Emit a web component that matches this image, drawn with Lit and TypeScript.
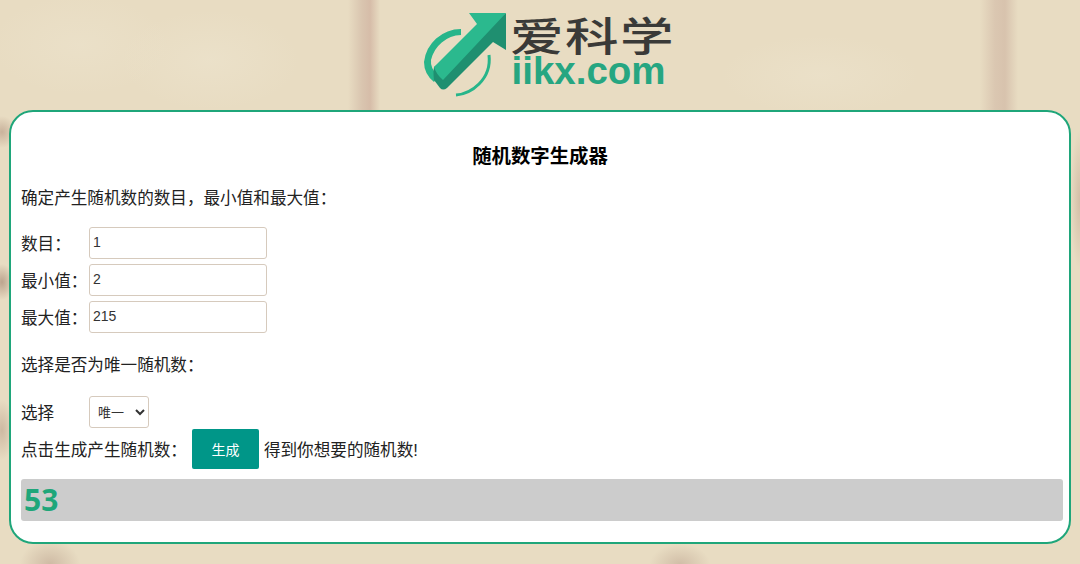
import { LitElement, html, css } from 'lit';
import { customElement, state } from 'lit/decorators.js';

@customElement('app-root')
export class AppRoot extends LitElement {
  @state() count = '1';
  @state() min = '2';
  @state() max = '215';
  @state() result = 53;

  static styles = css`
    :host {
      display: block;
      height: 564px;
      overflow: hidden;
      font-family: "Liberation Sans", "Noto Sans CJK SC", sans-serif;
      color: #222;
      font-size: 16.6px;
      background-color: #e8dcc2;
      /* blurred stripes of the paper photo behind the page */
      background-image:
        linear-gradient(90deg, transparent 348px, rgba(205, 178, 160, 0.55) 362px, rgba(208, 178, 160, 0.75) 370px, transparent 380px),
        linear-gradient(90deg, transparent 980px, rgba(205, 178, 160, 0.5) 995px, rgba(205, 178, 160, 0.6) 1005px, transparent 1018px),
        radial-gradient(ellipse 30px 24px at 50px 564px, rgba(190, 165, 145, 0.6), transparent),
        radial-gradient(ellipse 30px 20px at 680px 564px, rgba(190, 165, 145, 0.55), transparent),
        radial-gradient(ellipse 14px 16px at 2px 132px, rgba(180, 150, 130, 0.6), transparent),
        radial-gradient(ellipse 12px 18px at 2px 282px, rgba(170, 140, 120, 0.7), transparent),
        radial-gradient(ellipse 12px 30px at 2px 430px, rgba(180, 150, 130, 0.5), transparent),
        radial-gradient(ellipse 10px 70px at 1080px 200px, rgba(190, 160, 140, 0.5), transparent),
        radial-gradient(ellipse 90px 50px at 80px 45px, rgba(240, 233, 214, 0.3), transparent),
        radial-gradient(ellipse 90px 50px at 210px 60px, rgba(240, 233, 214, 0.35), transparent),
        radial-gradient(ellipse 100px 40px at 820px 75px, rgba(240, 233, 214, 0.3), transparent);
      background-size:
        100% 112px, 100% 112px,
        100% 100%, 100% 100%, 100% 100%, 100% 100%,
        100% 100%, 100% 100%, 100% 100%, 100% 100%, 100% 100%;
      background-repeat: no-repeat;
    }
    .header {
      height: 110px;
      display: flex;
      justify-content: center;
      padding-left: 14px;
    }
    .logo-mark {
      width: 90px;
      height: 88px;
      margin-top: 10px;
      flex: none;
    }
    .logo-text {
      width: 166px;
      margin-left: 1px;
      display: flex;
      flex-direction: column;
    }
    .logo-cn {
      font-family: "Noto Sans CJK SC", sans-serif;
      font-size: 40px;
      font-weight: 500;
      line-height: 46px;
      height: 46px;
      margin-top: 11px;
      color: #3a3a38;
      letter-spacing: 1px;
      white-space: nowrap;
      transform: scaleX(1.34);
      transform-origin: left center;
    }
    .logo-en {
      font-family: "Liberation Sans", sans-serif;
      font-weight: 700;
      font-size: 38.5px;
      line-height: 34px;
      color: #26a681;
      margin: -3px 0 0 2px;
      white-space: nowrap;
    }
    .panel {
      box-sizing: border-box;
      margin: 0 9px;
      height: 434px;
      background: #fff;
      border: 2px solid #1fa67a;
      border-radius: 24px;
      padding: 0 6px 0 10px;
      display: flex;
      flex-direction: column;
    }
    .title {
      margin: 32px 4px 0 0;
      height: 24px;
      line-height: 24px;
      text-align: center;
      font-size: 19.4px;
      font-weight: 700;
      color: #000;
    }
    .para {
      height: 24px;
      line-height: 24px;
    }
    .intro { margin-top: 19px; }
    .fields {
      margin-top: 16px;
      display: flex;
      flex-direction: column;
      gap: 5px;
    }
    .row {
      display: flex;
      align-items: center;
    }
    .row label {
      width: 68px;
      flex: none;
    }
    input {
      box-sizing: border-box;
      width: 178px;
      height: 32px;
      border: 1px solid #d6cabd;
      border-radius: 3px;
      padding: 0 3px 2px 3px;
      font: 14px "Liberation Sans", sans-serif;
      color: #333;
      outline: none;
    }
    .unique-title { margin-top: 21px; }
    .pick { margin-top: 18px; height: 32px; }
    select {
      box-sizing: border-box;
      width: 60px;
      height: 32px;
      border: 1px solid #d6cabd;
      border-radius: 3px;
      background: #fff;
      padding-left: 4px;
      font: 13px "Liberation Sans", "Noto Sans CJK SC", sans-serif;
      color: #333;
      outline: none;
    }
    .action { margin-top: 1px; height: 40px; }
    button {
      box-sizing: border-box;
      width: 67px;
      height: 40px;
      margin: 0 5px 0 5px;
      border: none;
      border-radius: 2px;
      background: #009688;
      color: #fff;
      font: 14px "Liberation Sans", "Noto Sans CJK SC", sans-serif;
      padding: 0;
    }
    .output {
      margin-top: 10px;
      height: 42px;
      line-height: 42px;
      background: #ccc;
      border-radius: 3px;
      padding-left: 3px;
      font-family: "Noto Sans", sans-serif;
      font-weight: 700;
      font-size: 30px;
      color: #1fa67a;
    }
  `;

  render() {
    return html`
      <div class="header">
        <svg class="logo-mark" viewBox="0 0 90 88">
          <path d="M42 19 A37 37 0 0 0 5 52 Q5 64 15 72 L19 66 Q11 58 12 50 A32 32 0 0 1 42 25 Z" fill="#27b58a" />
          <path d="M70 45 Q72 62 60 74 Q50 84 37 85" fill="none" stroke="#27b58a" stroke-width="3" />
          <path d="M87 3 V40 L74 32 L28 78 Q24 81 21 78 L15 70 Q14 62 15 57 Z" fill="#1f8f70" />
          <path d="M50 3 H87 L24 70 Q17 64 15 57 L58 14 Z" fill="#2bb98e" />
        </svg>
        <div class="logo-text">
          <div class="logo-cn">爱科学</div>
          <div class="logo-en">iikx.com</div>
        </div>
      </div>
      <div class="panel">
        <div class="title">随机数字生成器</div>
        <div class="para intro">确定产生随机数的数目，最小值和最大值：</div>
        <div class="fields">
          <div class="row"><label>数目：</label><input .value=${this.count} /></div>
          <div class="row"><label>最小值：</label><input .value=${this.min} /></div>
          <div class="row"><label>最大值：</label><input .value=${this.max} /></div>
        </div>
        <div class="para unique-title">选择是否为唯一随机数：</div>
        <div class="row pick">
          <label>选择</label>
          <select>
            <option>唯一</option>
            <option>不唯一</option>
          </select>
        </div>
        <div class="row action">
          <span>点击生成产生随机数：</span>
          <button>生成</button>
          <span>得到你想要的随机数!</span>
        </div>
        <div class="output">${this.result}</div>
      </div>
    `;
  }
}
